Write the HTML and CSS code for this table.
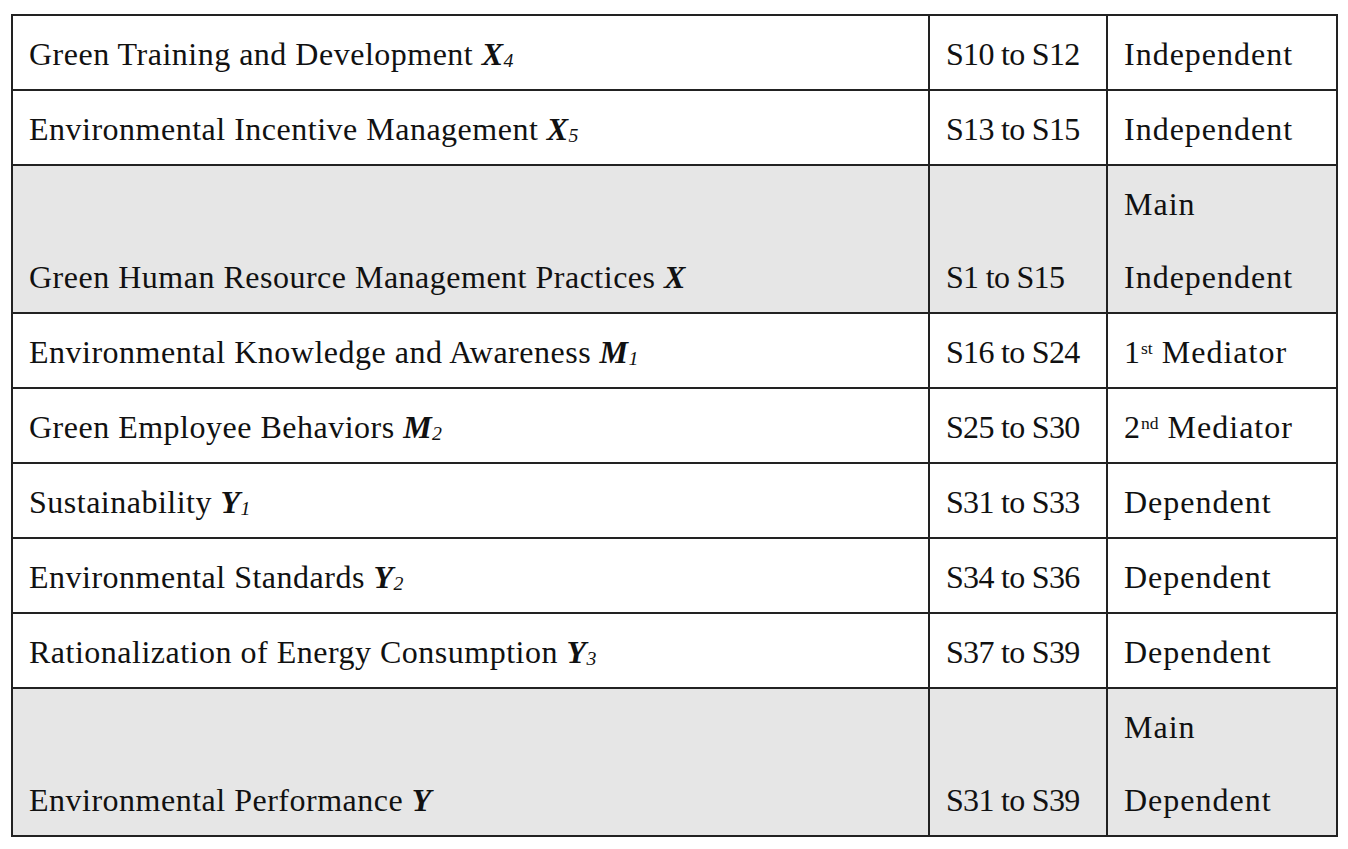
FILE: index.html
```html
<!DOCTYPE html>
<html lang="en">
<head>
<meta charset="utf-8">
<title>Variables table</title>
<link rel="stylesheet" href="styles.css">
</head>
<body>
<table class="vars">
  <colgroup>
    <col class="c-name">
    <col class="c-items">
    <col class="c-role">
  </colgroup>
  <tbody>
    <tr><td class="name"><span class="t">Green Training and Development <span class="sym">X</span><span class="sub">4</span></span></td><td class="items"><span class="t">S10 to S12</span></td><td class="role"><span class="t">Independent</span></td></tr>
    <tr><td class="name"><span class="t">Environmental Incentive Management <span class="sym">X</span><span class="sub">5</span></span></td><td class="items"><span class="t">S13 to S15</span></td><td class="role"><span class="t">Independent</span></td></tr>
    <tr class="main"><td class="name"><span class="t">Green Human Resource Management Practices <span class="sym">X</span></span></td><td class="items"><span class="t">S1 to S15</span></td><td class="role"><span class="t">Main<br>Independent</span></td></tr>
    <tr><td class="name"><span class="t">Environmental Knowledge and Awareness <span class="sym">M</span><span class="sub">1</span></span></td><td class="items"><span class="t">S16 to S24</span></td><td class="role"><span class="t">1<sup>st</sup> Mediator</span></td></tr>
    <tr><td class="name"><span class="t">Green Employee Behaviors <span class="sym">M</span><span class="sub">2</span></span></td><td class="items"><span class="t">S25 to S30</span></td><td class="role"><span class="t">2<sup>nd</sup> Mediator</span></td></tr>
    <tr><td class="name"><span class="t">Sustainability <span class="sym">Y</span><span class="sub">1</span></span></td><td class="items"><span class="t">S31 to S33</span></td><td class="role"><span class="t">Dependent</span></td></tr>
    <tr><td class="name"><span class="t">Environmental Standards <span class="sym">Y</span><span class="sub">2</span></span></td><td class="items"><span class="t">S34 to S36</span></td><td class="role"><span class="t">Dependent</span></td></tr>
    <tr><td class="name"><span class="t">Rationalization of Energy Consumption <span class="sym">Y</span><span class="sub">3</span></span></td><td class="items"><span class="t">S37 to S39</span></td><td class="role"><span class="t">Dependent</span></td></tr>
    <tr class="main"><td class="name"><span class="t">Environmental Performance <span class="sym">Y</span></span></td><td class="items"><span class="t">S31 to S39</span></td><td class="role"><span class="t">Main<br>Dependent</span></td></tr>
  </tbody>
</table>
</body>
</html>
```
FILE: styles.css
```css
html, body {
  margin: 0;
  padding: 0;
  background: #ffffff;
}
body {
  padding: 14px 0 0 11px;
  font-family: "Liberation Serif", "Times New Roman", serif;
  color: #111111;
}
.vars {
  border-collapse: collapse;
  width: 1325px;
  table-layout: fixed;
  font-size: 32px;
  line-height: 73px;
}
.c-name { width: 917px; }
.c-items { width: 178px; }
.c-role { width: 230px; }
.vars td {
  border: 2px solid #222222;
  padding: 0 0 0 16px;
  vertical-align: bottom;
  white-space: nowrap;
}
.vars .t {
  line-height: 67px;
  vertical-align: -2px;
}
.vars td.name { letter-spacing: 0.5px; }
.vars td.items { letter-spacing: -0.7px; }
.vars td.role { letter-spacing: 1px; }
.vars tr.main td {
  background: #e6e6e6;
}
.sym {
  font-weight: bold;
  font-style: italic;
}
.sub {
  font-style: italic;
  font-size: 0.62em;
  vertical-align: -0.08em;
  line-height: 0;
}
sup {
  font-size: 0.55em;
  vertical-align: 0.5em;
  line-height: 0;
  letter-spacing: 0;
}
```
